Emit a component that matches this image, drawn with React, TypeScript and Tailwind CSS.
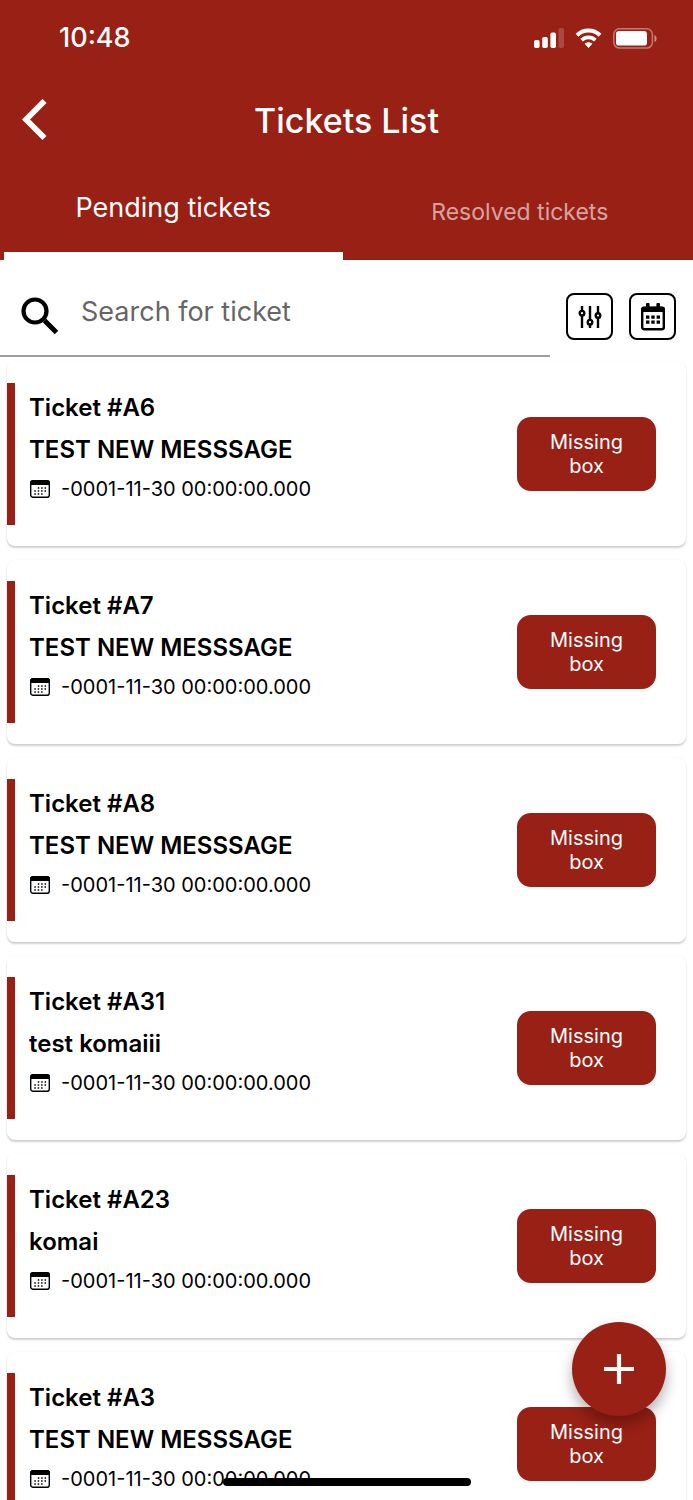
import type React from "react"
import { useState } from "react"

interface Ticket {
    id: string
    message: string
    createdAt: string
    type: string
}

type TabKey = "pending" | "resolved"

const PENDING_TICKETS: Ticket[] = [
    { id: "A6", message: "TEST NEW MESSSAGE", createdAt: "-0001-11-30 00:00:00.000", type: "Missing box" },
    { id: "A7", message: "TEST NEW MESSSAGE", createdAt: "-0001-11-30 00:00:00.000", type: "Missing box" },
    { id: "A8", message: "TEST NEW MESSSAGE", createdAt: "-0001-11-30 00:00:00.000", type: "Missing box" },
    { id: "A31", message: "test komaiii", createdAt: "-0001-11-30 00:00:00.000", type: "Missing box" },
    { id: "A23", message: "komai", createdAt: "-0001-11-30 00:00:00.000", type: "Missing box" },
    { id: "A3", message: "TEST NEW MESSSAGE", createdAt: "-0001-11-30 00:00:00.000", type: "Missing box" },
]

const SignalIcon = () => (
    <svg width="31" height="20" viewBox="0 0 31 20" fill="white" aria-hidden="true">
        <rect x="1" y="12" width="5.6" height="8" rx="1.8" />
        <rect x="9.2" y="9" width="5.6" height="11" rx="1.8" />
        <rect x="17.4" y="4.5" width="5.6" height="15.5" rx="1.8" />
        <rect x="25.4" y="0" width="5.6" height="20" rx="1.8" opacity="0.18" />
    </svg>
)

const WifiIcon = () => (
    <svg width="27" height="20" viewBox="0 0 27 20" aria-hidden="true">
        <path d="M2 7.3C8.4 1 18.6 1 25 7.3" fill="none" stroke="white" strokeWidth="4" />
        <path d="M6.6 12.2C10.5 8.4 16.5 8.4 20.4 12.2" fill="none" stroke="white" strokeWidth="3.8" />
        <path d="M9.6 15.8C11.9 13.8 15.1 13.8 17.4 15.8L13.5 20Z" fill="white" />
    </svg>
)

const BatteryIcon = () => (
    <svg width="44" height="21" viewBox="0 0 44 21" aria-hidden="true">
        <rect x="0.8" y="0.8" width="38.6" height="19.2" rx="5.6" fill="none" stroke="white" strokeOpacity="0.4" strokeWidth="1.5" />
        <rect x="3" y="3" width="31" height="14.6" rx="3.2" fill="white" />
        <path d="M41.5 7c2.8 1 2.8 6 0 7z" fill="white" fillOpacity="0.5" />
    </svg>
)

const BackIcon = () => (
    <svg width="26" height="42" viewBox="0 0 26 42" fill="none" stroke="white" strokeWidth="5.8" aria-hidden="true">
        <path d="M22.500 2L4 20.500l18.500 18.500" />
    </svg>
)

const SearchIcon = () => (
    <svg width="38" height="38" viewBox="0 0 38 38" fill="none" stroke="black" strokeWidth="4.2" aria-hidden="true">
        <circle cx="14" cy="14" r="11.5" />
        <path d="M23.5 23.5L35.5 35.5" strokeWidth="5" />
    </svg>
)

const FilterIcon = () => (
    <svg width="24" height="24" viewBox="0 0 24 24" fill="none" stroke="black" strokeWidth="2.4" aria-hidden="true">
        <path d="M4 1v4.500M4 10.500V23M12 1v13.500M12 19.500V23M20 1v7M20 13v10" />
        <circle cx="4" cy="8.200" r="2.300" />
        <circle cx="12" cy="17.200" r="2.300" />
        <circle cx="20" cy="10.500" r="2.300" />
    </svg>
)

const CalendarIcon = () => (
    <svg width="24" height="28" viewBox="0 0 24 28" aria-hidden="true">
        <path d="M5 1a1 1 0 0 1 1-1h1.600a1 1 0 0 1 1 1v4H5zM15.400 1a1 1 0 0 1 1-1H18a1 1 0 0 1 1 1v4h-3.600z" />
        <rect x="1.200" y="5" width="21.600" height="21.300" rx="2" fill="none" stroke="black" strokeWidth="2.400" />
        <path d="M0 6.500a3 3 0 0 1 3-3h18a3 3 0 0 1 3 3V9H0z" />
        <path d="M5 12.500h3.400v3.200H5zM10.300 12.500h3.400v3.200h-3.400zM15.600 12.500H19v3.200h-3.400zM5 17.500h3.400v3.200H5zM10.300 17.500h3.400v3.200h-3.400zM15.600 17.500H19v3.200h-3.400z" />
    </svg>
)

const DateIcon = () => (
    <svg width="20" height="18" viewBox="0 0 20 18" aria-hidden="true">
        <rect x="0.7" y="0.7" width="18.6" height="16.6" rx="2.4" fill="none" stroke="black" strokeWidth="1.4" />
        <path d="M0 5V3a3 3 0 0 1 3-3h14a3 3 0 0 1 3 3v2z" />
        <path d="M7.800 8h8.700M4.300 11h12.200M4.300 14h8.700" stroke="black" strokeWidth="1.500" strokeDasharray="1.5 1.9" />
    </svg>
)

interface TabButtonProps {
    label: string
    active: boolean
    onClick: () => void
}

const TabButton: React.FC<TabButtonProps> = ({ label, active, onClick }) => (
    <button
        type="button"
        role="tab"
        aria-selected={active}
        onClick={onClick}
        className={
            active
                ? "mx-1 flex-1 border-b-8 border-white text-[27px] text-white"
                : "mx-1 flex-1 text-[23px] text-white/60"
        }
    >
        {label}
    </button>
)

const TicketCard: React.FC<{ ticket: Ticket }> = ({ ticket }) => (
    <li className="flex items-center rounded-lg bg-white py-[21px] pr-[30px] shadow-[0_2px_2px_rgba(0,0,0,0.18),0_0_2px_rgba(0,0,0,0.05)]">
        <div className="flex min-w-0 flex-1 border-l-8 border-[#992015] pt-1 pb-[18px] pl-[14px]">
            <div className="min-w-0">
                <h2 className="text-[24px] leading-[42px] font-semibold">Ticket #{ticket.id}</h2>
                <p className="truncate text-[24px] leading-[42px] font-semibold">{ticket.message}</p>
                <p className="flex items-center gap-[11px] pl-px text-[20px] leading-[36px]">
                    <DateIcon />
                    {ticket.createdAt}
                </p>
            </div>
        </div>
        <span className="w-[139px] rounded-[14px] bg-[#992015] px-6 py-[13px] text-center text-[20px] leading-[24px] text-white">
            {ticket.type}
        </span>
    </li>
)

const App: React.FC = () => {
    const [tab, setTab] = useState<TabKey>("pending")
    const [query, setQuery] = useState("")

    const tickets = tab === "pending" ? PENDING_TICKETS : []
    const visibleTickets = tickets.filter((t) => `${t.id} ${t.message}`.toLowerCase().includes(query.toLowerCase()))

    return (
        <div className="relative flex h-screen flex-col overflow-hidden bg-white font-['Inter',sans-serif] text-black">
            <header className="bg-[#992015] text-white">
                <div className="flex h-[76px] items-center justify-between pr-9 pl-[59px]">
                    <span className="text-[27px] font-medium">10:48</span>
                    <div className="flex items-center gap-[11px]">
                        <SignalIcon />
                        <WifiIcon />
                        <BatteryIcon />
                    </div>
                </div>

                <div className="grid h-[88px] grid-cols-[1fr_auto_1fr] items-center px-[22px]">
                    <button type="button" aria-label="Back" className="justify-self-start">
                        <BackIcon />
                    </button>
                    <h1 className="text-[34px] font-medium">Tickets List</h1>
                </div>

                <div role="tablist" className="flex h-24">
                    <TabButton label="Pending tickets" active={tab === "pending"} onClick={() => setTab("pending")} />
                    <TabButton label="Resolved tickets" active={tab === "resolved"} onClick={() => setTab("resolved")} />
                </div>
            </header>

            <div className="flex h-[97px] items-end gap-4 pr-[17px]">
                <label className="flex h-full min-w-0 flex-1 items-center gap-[22px] border-b-2 border-[#9e9e9e] pt-4 pl-[21px]">
                    <SearchIcon />
                    <input
                        type="text"
                        aria-label="Search for ticket"
                        placeholder="Search for ticket"
                        value={query}
                        onChange={(e) => setQuery(e.target.value)}
                        className="min-w-0 flex-1 pb-1.5 text-[27px] outline-none placeholder:text-[#666666]"
                    />
                </label>
                <button
                    type="button"
                    aria-label="Filter"
                    className="mb-[17px] flex size-[47px] items-center justify-center rounded-lg border-2 border-black"
                >
                    <FilterIcon />
                </button>
                <button
                    type="button"
                    aria-label="Pick a date"
                    className="mb-[17px] flex size-[47px] items-center justify-center rounded-lg border-2 border-black"
                >
                    <CalendarIcon />
                </button>
            </div>

            <ul className="flex min-h-0 flex-1 flex-col gap-[14px] overflow-hidden px-[7px] pt-[5px]">
                {visibleTickets.map((ticket) => (
                    <TicketCard key={ticket.id} ticket={ticket} />
                ))}
            </ul>

            <button
                type="button"
                aria-label="Add ticket"
                className="absolute right-[27px] bottom-[84px] flex size-[94px] items-center justify-center rounded-full bg-[#992015] shadow-[0_8px_14px_rgba(0,0,0,0.3)]"
            >
                <svg width="30" height="30" viewBox="0 0 30 30" fill="none" stroke="white" strokeWidth="4.2" aria-hidden="true">
                    <path d="M15 0v30M0 15h30" />
                </svg>
            </button>

            <div className="absolute bottom-[14px] left-1/2 h-2 w-[248px] -translate-x-1/2 rounded-full bg-black" />
        </div>
    )
}

export default App
